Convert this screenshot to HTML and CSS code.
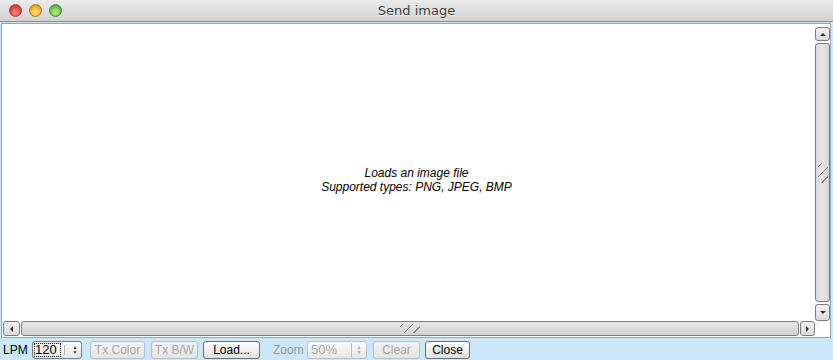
FILE: index.html
```html
<!DOCTYPE html>
<html lang="en">

<head>
    <meta charset="UTF-8">
    <title>Send image</title>
    <link rel="stylesheet" href="styles.css">
</head>

<body>
    <div class="titlebar">
        <div class="lights">
            <span class="light red"></span>
            <span class="light yellow"></span>
            <span class="light green"></span>
        </div>
        <div class="title">Send image</div>
    </div>

    <div class="frame">
        <div class="canvas">
            <p>Loads an image file<br>Supported types: PNG, JPEG, BMP</p>
        </div>
        <div class="vbar">
            <div class="sbtn up"><span class="arr-up"></span></div>
            <div class="vthumb"><span class="grip-v"></span></div>
            <div class="sbtn down"><span class="arr-down"></span></div>
        </div>
        <div class="hbar">
            <div class="sbtn left"><span class="arr-left"></span></div>
            <div class="hthumb"><span class="grip-h"></span></div>
            <div class="sbtn right"><span class="arr-right"></span></div>
        </div>
        <div class="corner"></div>
    </div>

    <div class="toolbar">
        <span class="label lpm-label">LPM</span>
        <div class="spin lpm">
            <span class="spin-val focus">120</span>
            <span class="spin-arrows">&#9650;<br>&#9660;</span>
        </div>
        <button class="btn off tx-color">Tx Color</button>
        <button class="btn off tx-bw">Tx B/W</button>
        <button class="btn load">Load...</button>
        <span class="label dim zoom">Zoom</span>
        <div class="spin off zoomspin">
            <span class="spin-val">50%</span>
            <span class="spin-arrows">&#9650;<br>&#9660;</span>
        </div>
        <button class="btn off clear">Clear</button>
        <button class="btn close">Close</button>
    </div>
</body>

</html>
```

FILE: styles.css
```css
html, body {
    margin: 0;
    padding: 0;
}

body {
    width: 833px;
    height: 360px;
    background-color: #cbe7f9;
    font-family: "Liberation Sans", Arial, sans-serif;
    display: flex;
    flex-direction: column;
    overflow: hidden;
}

/* title bar */
.titlebar {
    height: 21px;
    position: relative;
    background: linear-gradient(#ebebeb, #d2d2d2);
    border-bottom: 1px solid #8a8a8a;
}

.lights {
    display: flex;
    gap: 7px;
    padding: 4px 0 0 9px;
}

.light {
    width: 13px;
    height: 13px;
    border-radius: 50%;
    box-sizing: border-box;
}

.red {
    background: radial-gradient(circle at 50% 65%, #ff9a8e, #e0443a 55%, #b1241c);
    border: 1px solid #a8413b;
}

.yellow {
    background: radial-gradient(circle at 50% 65%, #ffe28a, #f0b02a 55%, #c07d10);
    border: 1px solid #a77a2b;
}

.green {
    background: radial-gradient(circle at 50% 65%, #c4f0a0, #6cc447 55%, #3c8d1f);
    border: 1px solid #4f8a35;
}

.title {
    position: absolute;
    left: 0;
    right: 0;
    top: 3px;
    text-align: center;
    font-family: "DejaVu Sans", sans-serif;
    font-size: 13px;
    color: #3c3c3c;
    text-shadow: 0 1px 0 #f4f4f4;
}

/* main area */
.frame {
    height: 313px;
    margin: 1px 2px 0 1px;
    border: 1px solid #8ea8be;
    background: #ffffff;
    display: grid;
    grid-template-columns: 813px 15px;
    grid-template-rows: 297px 15px;
}

.canvas {
    display: flex;
    align-items: center;
    justify-content: center;
    padding-left: 16px;
}

.canvas p {
    margin: 0;
    font-size: 12px;
    font-style: italic;
    text-align: center;
    line-height: 14px;
    color: #000;
    padding-top: 14px;
}

.vbar {
    display: flex;
    flex-direction: column;
    gap: 2px;
    padding: 3px 0 0 0;
}

.hbar {
    display: flex;
    gap: 1px;
    padding-left: 1px;
}

.sbtn {
    box-sizing: border-box;
    border: 1px solid #7c7c7c;
    border-radius: 3px;
    background: linear-gradient(#f2f2f2, #dadada);
    display: flex;
    align-items: center;
    justify-content: center;
}

.vbar .sbtn {
    width: 15px;
    height: 14px;
}

.vbar .down {
    height: 17px;
}

.hbar .sbtn {
    width: 17px;
    height: 15px;
}

.hbar .right {
    width: 15px;
}

.arr-up, .arr-down, .arr-left, .arr-right {
    width: 0;
    height: 0;
    border: 3px solid transparent;
}

.arr-up {
    border-bottom: 3px solid #333;
    margin-bottom: 3px;
}

.arr-down {
    border-top: 3px solid #333;
    margin-top: 3px;
}

.arr-left {
    border-right: 3px solid #333;
    margin-right: 3px;
}

.arr-right {
    border-left: 3px solid #333;
    margin-left: 3px;
}

.vthumb, .hthumb {
    box-sizing: border-box;
    border: 1px solid #7c7c7c;
    border-radius: 3px;
    display: flex;
    align-items: center;
    justify-content: center;
}

.vthumb {
    width: 15px;
    flex: 1;
    background: linear-gradient(90deg, #d8d8d8, #e6e6e6 50%, #d4d4d4);
}

.hthumb {
    flex: 1;
    height: 15px;
    background: linear-gradient(#e6e6e6, #d2d2d2);
}

.grip-v {
    width: 10px;
    height: 20px;
    background: repeating-linear-gradient(-45deg, transparent 0 4px, #888 4px 5px, transparent 5px 7px);
}

.grip-h {
    width: 20px;
    height: 9px;
    background: repeating-linear-gradient(-45deg, transparent 0 4px, #888 4px 5px, transparent 5px 7px);
}

.corner {
    background: #ffffff;
}

/* bottom toolbar */
.toolbar {
    flex: 1;
    display: flex;
    align-items: center;
    padding: 1px 0 0 3px;
    font-size: 12px;
}

.label {
    color: #000;
    white-space: nowrap;
}

.lpm-label {
    width: 29px;
}

.label.dim {
    color: #9a9a9a;
}

.zoom {
    margin-left: 13px;
    width: 34px;
}

.spin {
    box-sizing: border-box;
    height: 18px;
    display: flex;
    align-items: center;
    border: 1px solid #7b7b7b;
    border-radius: 3px;
    background: linear-gradient(#fbfbfb, #e6e6e6);
}

.lpm {
    width: 50px;
}

.zoomspin {
    width: 60px;
}

.spin-val {
    flex: 1;
    padding-left: 2px;
    font-size: 13px;
    line-height: 14px;
    border-right: 1px solid #bbbbbb;
}

.spin-val.focus {
    flex: none;
    width: 26px;
    outline: 1px dotted #000;
    outline-offset: -1px;
    margin-left: 1px;
    padding-left: 1px;
    margin-right: 3px;
    border-right: none;
}

.lpm .spin-arrows {
    border-left: 1px solid #bbbbbb;
    padding-left: 4px;
}

.spin-arrows {
    font-size: 5px;
    line-height: 5px;
    width: 14px;
    text-align: center;
    color: #333;
}

.zoomspin .spin-val {
    padding-left: 3px;
}

.spin.off {
    border-color: #c0c0c0;
    color: #a8a8a8;
}

.spin.off .spin-arrows {
    color: #a8a8a8;
}

.btn {
    box-sizing: border-box;
    height: 18px;
    margin-left: 6px;
    padding: 0;
    white-space: nowrap;
    font-family: "Liberation Sans", Arial, sans-serif;
    font-size: 12px;
    color: #000;
    border: 1px solid #6e6e6e;
    border-radius: 3px;
    background: linear-gradient(#fdfdfd, #e2e2e2);
}

.btn.off {
    color: #a8a8a8;
    border-color: #bdbdbd;
    background: linear-gradient(#f3f3f3, #e4e4e4);
}

.tx-color {
    margin-left: 8px;
    width: 55px;
}

.tx-bw {
    width: 47px;
}

.load {
    width: 57px;
    margin-left: 5px;
}

.clear {
    width: 47px;
}

.close {
    width: 45px;
    margin-left: 5px;
}
```
